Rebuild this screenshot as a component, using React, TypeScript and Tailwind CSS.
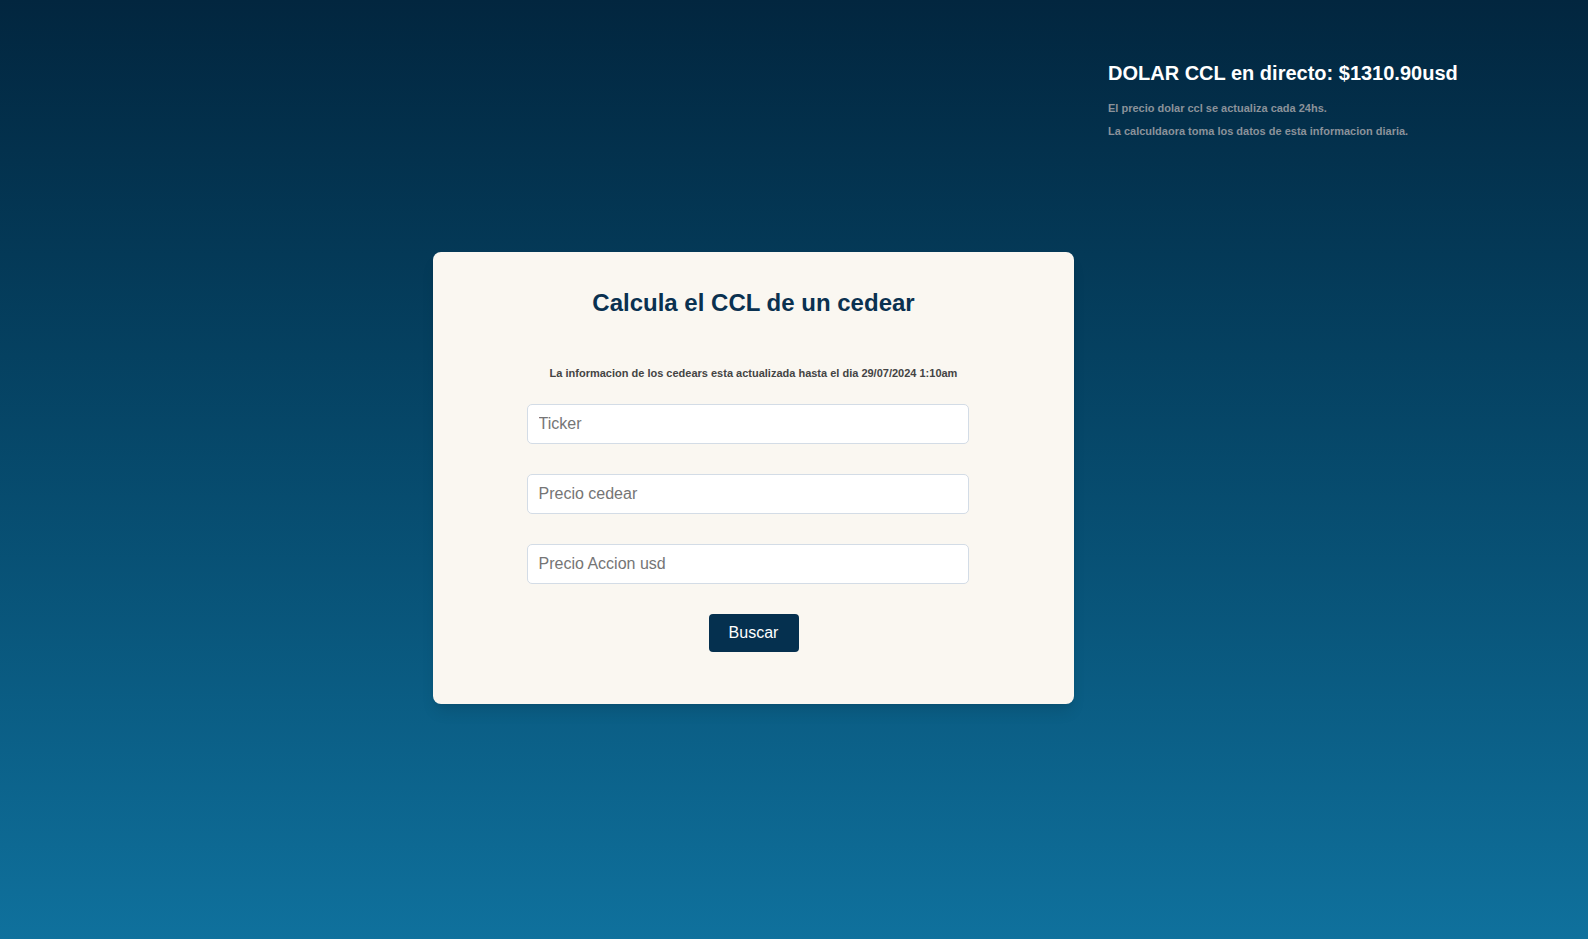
const FONT = "font-['Liberation_Sans',Arial,sans-serif]";

function Field({ placeholder }: { placeholder: string }) {
  return (
    <input
      type="text"
      placeholder={placeholder}
      className="h-[40px] w-[442px] rounded-[5px] border border-[#d3dce6] bg-white px-[11px] text-[16px] text-[#333] placeholder:text-[#757575] outline-none"
    />
  );
}

export default function App() {
  return (
    <div className={`min-h-[939px] bg-gradient-to-b from-[#02263f] to-[#0f719d] ${FONT}`}>
      <header className="flex justify-end pt-[62px]">
        <div className="w-[480px]">
          <h2 className="text-[20px] font-bold leading-[22px] text-white">DOLAR CCL en directo: $1310.90usd</h2>
          <p className="mt-[18px] text-[11px] font-bold leading-[13px] text-[#8b929a]">
            El precio dolar ccl se actualiza cada 24hs.
          </p>
          <p className="mt-[10px] text-[11px] font-bold leading-[13px] text-[#8b929a]">
            La calculdaora toma los datos de esta informacion diaria.
          </p>
        </div>
      </header>

      <main className="mt-[114px] pl-[433px]">
        <div className="flex w-[641px] flex-col items-center rounded-[8px] bg-[#faf7f1] pt-[36px] pb-[52px] shadow-lg">
          <h1 className="text-[24px] font-bold leading-[30px] text-[#0a3150]">Calcula el CCL de un cedear</h1>
          <p className="mt-[48px] text-[11px] font-bold leading-[14px] text-[#444]">
            La informacion de los cedears esta actualizada hasta el dia 29/07/2024 1:10am
          </p>
          <form className="mt-[24px] flex flex-col gap-[30px] pr-[12px]">
            <Field placeholder="Ticker" />
            <Field placeholder="Precio cedear" />
            <Field placeholder="Precio Accion usd" />
          </form>
          <button className="mt-[30px] h-[38px] w-[90px] rounded-[4px] bg-[#05304f] text-[16px] text-white">
            Buscar
          </button>
        </div>
      </main>
    </div>
  );
}
